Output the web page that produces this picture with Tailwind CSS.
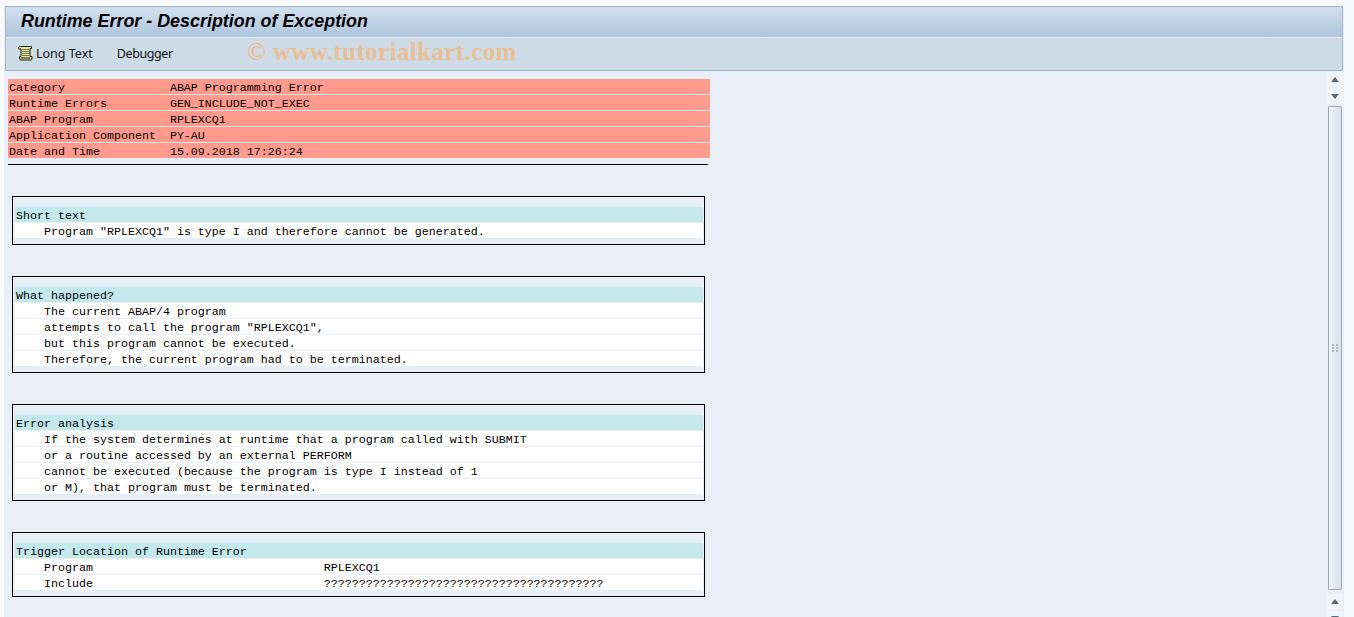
<!DOCTYPE html>
<html lang="en">
<head>
    <meta charset="UTF-8">
    <title>Runtime Error - Description of Exception</title>
    <script src="https://cdn.jsdelivr.net/npm/@tailwindcss/browser@4"></script>
</head>
<body class="h-[617px] w-[1354px] overflow-hidden bg-[#f9fafc] pt-[6px] pl-[4px] font-['Liberation_Mono',monospace] text-[11.67px] leading-[15px] text-black">
    <div class="w-[1340px] h-[611px] bg-[#e9eff7]">
        <!-- Title and toolbar -->
        <div class="ml-[1px] w-[1338px] h-[65px] border border-[#a3b5c9] bg-[#cddbe7]">
            <div class="h-[30px] bg-gradient-to-b from-[#d2e1ef] to-[#aec5db] pl-[15px] flex items-center">
                <h1 class="font-['Liberation_Sans',sans-serif] font-bold italic text-[17.9px] leading-none text-black">Runtime Error - Description of Exception</h1>
            </div>
            <div class="h-[1px] bg-[#e4edf5]"></div>
            <div class="relative h-[32px] flex items-center pl-[11px] pb-[2px] font-['Noto_Sans',sans-serif] text-[12.5px] text-[#111]">
                <svg class="w-[16px] h-[16px] mr-[3px] -mt-[1px]" viewBox="0 0 16 16">
                    <path d="M3.5 1.5H14.5V3.5H13V11.5H15V14C15 14.5 14.5 15 14 15H4C3 15 2.5 14 3 13H2.5V11.5H4V4H2C1 4 1 1.5 3.500 1.500Z" fill="#e6e2a8" stroke="#1c1c10" stroke-width="1"/>
                    <path d="M5 4.500H12M5 6.500H12M5 8.500H12M5 10.500H12" stroke="#7c7a3c" stroke-width="1"/>
                    <path d="M4 13H13" stroke="#1c1c10" stroke-width="1"/>
                </svg>
                <span>Long Text</span>
                <span class="ml-[24px] tracking-[-0.4px]">Debugger</span>
                <span class="absolute left-[241px] top-0 font-['Liberation_Serif',serif] font-bold text-[25px] leading-[28px] tracking-[0.4px] text-[#e9bf91]">© www.tutorialkart.com</span>
            </div>
        </div>

        <div class="flex">
            <!-- List output -->
            <div class="w-[1323px] h-[546px] overflow-hidden pt-[8px] pl-[4px]">
                <div class="w-[702px] bg-[#ff9a8d]">
                    <div class="h-[16px] pt-[2px] pl-[1px] whitespace-pre border-b border-[#fde4e0]">Category               ABAP Programming Error</div>
                    <div class="h-[16px] pt-[2px] pl-[1px] whitespace-pre border-b border-[#fde4e0]">Runtime Errors         GEN_INCLUDE_NOT_EXEC</div>
                    <div class="h-[16px] pt-[2px] pl-[1px] whitespace-pre border-b border-[#fde4e0]">ABAP Program           RPLEXCQ1</div>
                    <div class="h-[16px] pt-[2px] pl-[1px] whitespace-pre border-b border-[#fde4e0]">Application Component  PY-AU</div>
                    <div class="h-[15px] pt-[2px] pl-[1px] whitespace-pre">Date and Time          15.09.2018 17:26:24</div>
                </div>
                <div class="w-[700px] h-[1px] bg-black mt-[6px]"></div>

                <div class="mt-[31px] ml-[4px] w-[693px] h-[49px] border border-black pt-[10px] pl-[2px]">
                    <div class="w-[688px] h-[16px] pt-[2px] pl-[1px] whitespace-pre bg-[#c3e9ec] border-b border-[#e9eff7]">Short text</div>
                    <div class="w-[688px] h-[15px] pt-[2px] pl-[1px] whitespace-pre bg-white">    Program "RPLEXCQ1" is type I and therefore cannot be generated.</div>
                </div>

                <div class="mt-[31px] ml-[4px] w-[693px] h-[97px] border border-black pt-[10px] pl-[2px]">
                    <div class="w-[688px] h-[16px] pt-[2px] pl-[1px] whitespace-pre bg-[#c3e9ec] border-b border-[#e9eff7]">What happened?</div>
                    <div class="w-[688px] h-[16px] pt-[2px] pl-[1px] whitespace-pre bg-white border-b border-[#e9eff7]">    The current ABAP/4 program</div>
                    <div class="w-[688px] h-[16px] pt-[2px] pl-[1px] whitespace-pre bg-white border-b border-[#e9eff7]">    attempts to call the program "RPLEXCQ1",</div>
                    <div class="w-[688px] h-[16px] pt-[2px] pl-[1px] whitespace-pre bg-white border-b border-[#e9eff7]">    but this program cannot be executed.</div>
                    <div class="w-[688px] h-[15px] pt-[2px] pl-[1px] whitespace-pre bg-white">    Therefore, the current program had to be terminated.</div>
                </div>

                <div class="mt-[31px] ml-[4px] w-[693px] h-[97px] border border-black pt-[10px] pl-[2px]">
                    <div class="w-[688px] h-[16px] pt-[2px] pl-[1px] whitespace-pre bg-[#c3e9ec] border-b border-[#e9eff7]">Error analysis</div>
                    <div class="w-[688px] h-[16px] pt-[2px] pl-[1px] whitespace-pre bg-white border-b border-[#e9eff7]">    If the system determines at runtime that a program called with SUBMIT</div>
                    <div class="w-[688px] h-[16px] pt-[2px] pl-[1px] whitespace-pre bg-white border-b border-[#e9eff7]">    or a routine accessed by an external PERFORM</div>
                    <div class="w-[688px] h-[16px] pt-[2px] pl-[1px] whitespace-pre bg-white border-b border-[#e9eff7]">    cannot be executed (because the program is type I instead of 1</div>
                    <div class="w-[688px] h-[15px] pt-[2px] pl-[1px] whitespace-pre bg-white">    or M), that program must be terminated.</div>
                </div>

                <div class="mt-[31px] ml-[4px] w-[693px] h-[65px] border border-black pt-[10px] pl-[2px]">
                    <div class="w-[688px] h-[16px] pt-[2px] pl-[1px] whitespace-pre bg-[#c3e9ec] border-b border-[#e9eff7]">Trigger Location of Runtime Error</div>
                    <div class="w-[688px] h-[16px] pt-[2px] pl-[1px] whitespace-pre bg-white border-b border-[#e9eff7]">    Program                                 RPLEXCQ1</div>
                    <div class="w-[688px] h-[15px] pt-[2px] pl-[1px] whitespace-pre bg-white">    Include                                 ????????????????????????????????????????</div>
                </div>
            </div>

            <!-- Vertical scrollbar -->
            <div class="w-[16px] h-[546px] overflow-hidden flex flex-col items-center pt-[1px]">
                <div class="w-[16px] h-[15px] mb-[2px] shrink-0 bg-[#f1f5fa] flex items-center justify-center">
                    <div class="w-0 h-0 border-x-[4px] border-x-transparent border-b-[5px] border-b-[#55687c]"></div>
                </div>
                <div class="w-[16px] h-[15px] mb-[2px] shrink-0 bg-[#f1f5fa] flex items-center justify-center">
                    <div class="w-0 h-0 border-x-[4px] border-x-transparent border-t-[5px] border-t-[#55687c]"></div>
                </div>
                <div class="w-[14px] h-[484px] shrink-0 border border-[#9aabbb] rounded-[1px] bg-gradient-to-r from-[#eef3f8] to-[#d5e0ea] flex items-center justify-center">
                    <div class="grid grid-cols-2 gap-x-[2px] gap-y-[1px]">
                        <div class="w-[2px] h-[2px] bg-[#a9b9c8]"></div>
                        <div class="w-[2px] h-[2px] bg-[#a9b9c8]"></div>
                        <div class="w-[2px] h-[2px] bg-[#a9b9c8]"></div>
                        <div class="w-[2px] h-[2px] bg-[#a9b9c8]"></div>
                        <div class="w-[2px] h-[2px] bg-[#a9b9c8]"></div>
                        <div class="w-[2px] h-[2px] bg-[#a9b9c8]"></div>
                    </div>
                </div>
                <div class="w-[16px] h-[15px] mt-[4px] mb-[2px] shrink-0 bg-[#f1f5fa] flex items-center justify-center">
                    <div class="w-0 h-0 border-x-[4px] border-x-transparent border-b-[5px] border-b-[#55687c]"></div>
                </div>
                <div class="w-[16px] h-[15px] shrink-0 bg-[#f1f5fa] flex items-center justify-center">
                    <div class="w-0 h-0 border-x-[4px] border-x-transparent border-t-[5px] border-t-[#55687c]"></div>
                </div>
            </div>
        </div>
    </div>
</body>
</html>
